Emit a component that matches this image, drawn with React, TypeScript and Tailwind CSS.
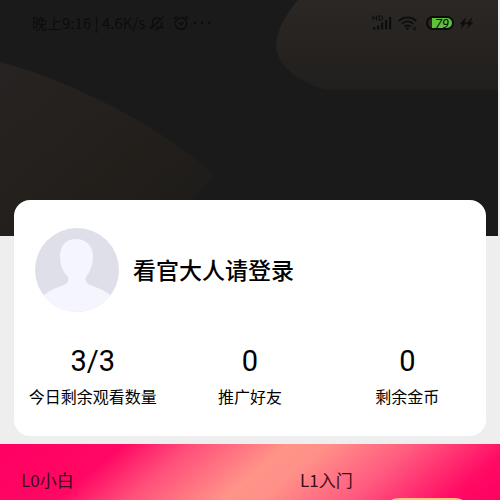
const stats = [
  { value: '3/3', label: '今日剩余观看数量' },
  { value: '0', label: '推广好友' },
  { value: '0', label: '剩余金币' },
]

function MutedBell() {
  return (
    <svg className="h-4 w-4" viewBox="0 0 16 16" fill="none" stroke="currentColor" strokeWidth="1.3" aria-hidden="true">
      <path d="M3.500 11.500V7.500C3.500 4.500 5.300 2.800 8 2.800c1.200 0 2.200.4 3 1M12.500 6.500v5M1 12.500h3.500M7 12.500h8M6.500 14.500h3M1.500 14 14.500 1.500" />
    </svg>
  )
}

function AlarmClock() {
  return (
    <svg className="h-4 w-4" viewBox="0 0 16 16" fill="none" stroke="currentColor" strokeWidth="1.4" aria-hidden="true">
      <circle cx="8" cy="8.500" r="5.700" />
      <path d="M5.500 7.500 8 9.500l2.500-2M.8 4 4 1.200M15.200 4 12 1.200" />
    </svg>
  )
}

function Signal() {
  return (
    <svg className="h-4 w-5" viewBox="0 0 20 16" fill="currentColor" aria-hidden="true">
      <path d="M1 12h2.200v2.500H1zM5 10.500h2.200v4H5zM9 7.500h2.200v7H9zM13 5h2.200v9.500H13zM17 2h2.200v12.500H17z" />
      <path d="M1 .5v5M4.500.5v5M1 3h3.500M7 .5v5M7 1h1.500c3 0 3 4 0 4H7" fill="none" stroke="currentColor" strokeWidth="1" />
    </svg>
  )
}

function Wifi() {
  return (
    <svg className="h-4 w-5" viewBox="0 0 20 16" fill="none" stroke="currentColor" strokeWidth="1.800" aria-hidden="true">
      <path d="M.8 6.200C5.500 1 13.500 1 18.200 6.200M3.800 9c3.200-3.400 8.200-3.400 11.400 0M6.500 11.700c1.800-1.800 4.200-1.800 6 0" />
      <circle cx="9.500" cy="13.700" r="1.300" fill="currentColor" stroke="none" />
      <circle cx="16.500" cy="13.500" r="1.300" strokeWidth="1" />
    </svg>
  )
}

function Bolts() {
  return (
    <svg className="h-4 w-4" viewBox="0 0 16 16" fill="currentColor" aria-hidden="true">
      <path d="M8.500 2 1.500 9.200h3L2.500 14l6.700-6.800H6.300zM14.500 2 7.800 9.200h3L8.800 14l6.700-6.800h-3z" />
    </svg>
  )
}

function StatusBar() {
  return (
    <div className="relative flex h-[46px] items-center justify-between pr-6 pl-8 text-[#0c0c0c]">
      <div className="flex items-center">
        <span className="text-[15px] leading-5 whitespace-pre">晚上9:16 | 4.6K/s</span>
        <div className="ml-1 flex items-center gap-2">
          <MutedBell />
          <AlarmClock />
        </div>
        <svg className="ml-1 h-4 w-5" viewBox="0 0 20 16" fill="currentColor" aria-hidden="true">
          <circle cx="2" cy="8" r="1.200" />
          <circle cx="9" cy="8" r="1.200" />
          <circle cx="16" cy="8" r="1.200" />
        </svg>
      </div>
      <div className="flex items-center">
        <Signal />
        <span className="ml-1.5">
          <Wifi />
        </span>
        <span className="ml-2 flex h-[14px] w-7 rounded-full border-2 border-[#0c0c0c]">
          <span className="ml-1 flex flex-1 items-center justify-center rounded-r-full bg-[#5fc03a] font-[Roboto,sans-serif] text-[13px] leading-none italic">
            79
          </span>
        </span>
        <span className="ml-1">
          <Bolts />
        </span>
      </div>
    </div>
  )
}

function Banner() {
  return (
    <header className="relative mr-0.5 h-[236px] shrink-0 overflow-hidden bg-[#1a1a1a]">
      <svg className="absolute inset-0 h-full w-full" viewBox="0 0 498 236" preserveAspectRatio="none" aria-hidden="true">
        <defs>
          <linearGradient id="plate" x1="0" y1="0" x2="0" y2="1">
            <stop offset="0" stopColor="#2b2725" />
            <stop offset="1" stopColor="#211f1d" />
          </linearGradient>
          <linearGradient id="hill" x1="0" y1="0" x2="1" y2="1">
            <stop offset="0" stopColor="#272322" />
            <stop offset="0.600" stopColor="#221f1b" />
            <stop offset="1" stopColor="#1c1a19" />
          </linearGradient>
        </defs>
        <path d="M298 0C283 18 276 33 276 47c1 18 24 38 54 43h168V0z" fill="url(#plate)" />
        <path d="M0 62c55 14 130 50 172 80 20 14 36 26 42 34-8 8-16 14-20 24v36H0z" fill="url(#hill)" />
      </svg>
      <StatusBar />
    </header>
  )
}

function Avatar() {
  return (
    <svg className="h-[84px] w-[84px] shrink-0" viewBox="0 0 84 84" role="img" aria-label="头像">
      <clipPath id="face">
        <circle cx="42" cy="42" r="42" />
      </clipPath>
      <g clipPath="url(#face)">
        <rect width="84" height="84" fill="#dedfe8" />
        <path
          d="M41 11c-10 0-16 7-16 17 0 9 3 16 8 21 1 3 0 6-4 8-8 3-15 5-21 11v16h68V68c-6-6-13-8-21-11-4-2-5-5-4-8 4-5 7-12 7-21 0-10-7-17-17-17z"
          fill="#f5f5fe"
        />
      </g>
    </svg>
  )
}

function ProfileCard() {
  return (
    <section className="relative mx-[14px] -mt-9 rounded-2xl bg-white pt-7 pb-7 text-black">
      <div className="flex items-center gap-[14px] pl-[21px]">
        <Avatar />
        <a href="#login" className="pb-0.5 text-[23px] leading-8 font-medium">
          看官大人请登录
        </a>
      </div>
      <dl className="mt-8 grid grid-cols-3 text-center">
        {stats.map((s) => (
          <div key={s.label} className="flex flex-col-reverse">
            <dt className="mt-[5px] text-[16px] leading-6">{s.label}</dt>
            <dd className="font-[Roboto,sans-serif] text-[29px] leading-[35px]">{s.value}</dd>
          </div>
        ))}
      </dl>
    </section>
  )
}

function Levels() {
  return (
    <section className="mt-2 grid flex-1 grid-cols-[279fr_179fr] content-start overflow-hidden bg-[linear-gradient(140deg,#ff0062_0%,#ff0864_22%,#ff4f7a_34%,#ff9488_51%,#ff9088_58%,#ff5c80_73%,#ff0a64_91%,#ff0062_100%)] px-[21px] pt-6 text-[17px] leading-6 text-[#3b0b18]">
      <h2>L0小白</h2>
      <h2>L1入门</h2>
      <div className="col-start-2 mt-1.5 mr-2 ml-auto h-8 w-[88px] rounded-full bg-[#ffc57c]" />
    </section>
  )
}

export default function App() {
  return (
    <main className="flex h-screen flex-col overflow-hidden bg-[#eeeeee] font-['Noto_Sans_CJK_SC',sans-serif]">
      <Banner />
      <ProfileCard />
      <Levels />
    </main>
  )
}
